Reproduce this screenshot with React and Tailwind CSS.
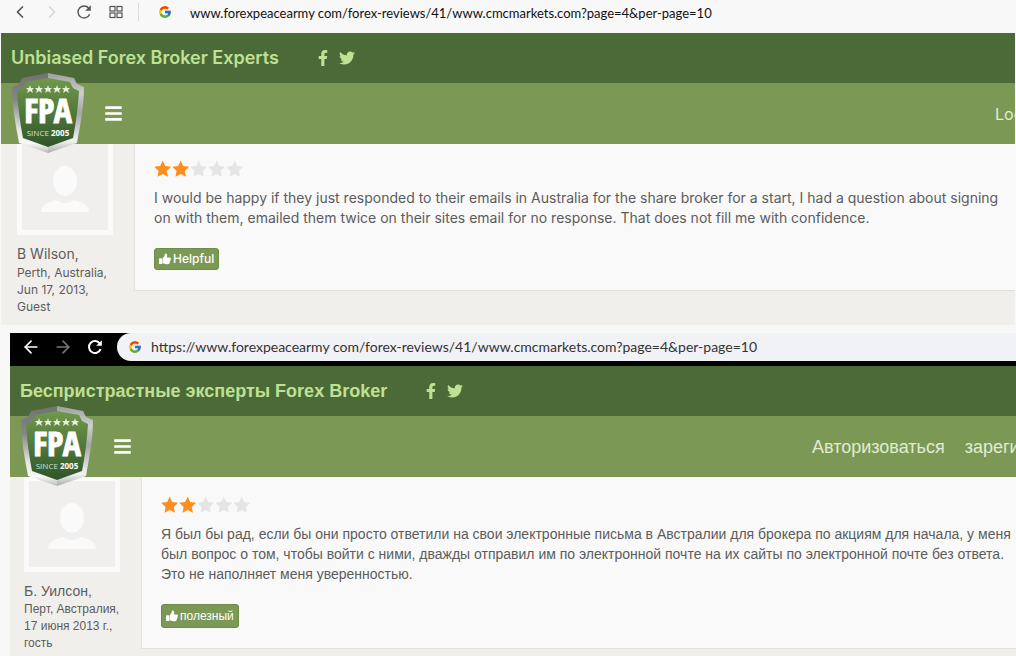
import React from "react";
import { ArrowLeft, ArrowRight, ChevronLeft, ChevronRight } from "lucide-react";
import { FaBars, FaFacebookF, FaTwitter } from "react-icons/fa";
import { FcGoogle } from "react-icons/fc";

const english = {
  id: "en",
  title: "Unbiased Forex Broker Experts",
  links: ["Login"],
  author: "B Wilson,",
  details: ["Perth, Australia,", "Jun 17, 2013,", "Guest"],
  rating: 2,
  text: "I would be happy if they just responded to their emails in Australia for the share broker for a start, I had a question about signing on with them, emailed them twice on their sites email for no response. That does not fill me with confidence.",
  helpful: "Helpful",
};

const russian = {
  id: "ru",
  title: "Беспристрастные эксперты Forex Broker",
  links: ["Авторизоваться", "зарегистрироваться"],
  author: "Б. Уилсон,",
  details: ["Перт, Австралия,", "17 июня 2013 г.,", "гость"],
  rating: 2,
  text: "Я был бы рад, если бы они просто ответили на свои электронные письма в Австралии для брокера по акциям для начала, у меня был вопрос о том, чтобы войти с ними, дважды отправил им по электронной почте на их сайты по электронной почте без ответа. Это не наполняет меня уверенностью.",
  helpful: "полезный",
};

function ReloadIcon({ thick }) {
  return (
    <svg viewBox="0 0 16 16" className="w-4 h-4" fill="none" stroke="currentColor" strokeWidth={thick ? 2 : 1.4}>
      <path d="M13.6 10.2A6 6 0 1 1 13 4.6" />
      <path d="M14.8 1.2v5.6H9.2Z" fill="currentColor" stroke="none" />
    </svg>
  );
}

function GridIcon() {
  return (
    <svg viewBox="0 0 16 16" className="w-4 h-4" fill="none" stroke="currentColor" strokeWidth="1.2">
      <rect x="2" y="2.5" width="5" height="4.5" />
      <rect x="9" y="2.5" width="5" height="4.5" />
      <rect x="2" y="9" width="5" height="4.5" />
      <rect x="9" y="9" width="5" height="4.5" />
    </svg>
  );
}

function StarIcon({ className }) {
  return (
    <svg viewBox="0 0 18 18" className={`w-[18px] h-[18px] ${className}`} fill="currentColor">
      <path d="M8.7 0.6l2.5 5.4 5.9.8-4.3 4.1 1.1 5.9-5.2-2.9-5.2 2.9 1.1-5.9L.3 6.8 6.2 6Z" />
    </svg>
  );
}

function ThumbIcon() {
  return (
    <svg viewBox="0 0 12 12" className="w-3 h-3" fill="currentColor">
      <rect x="0" y="5.2" width="3" height="5.8" rx="0.6" />
      <path d="M3.4 5.4C4.6 4.8 5.2 3.6 5.6 2.6 5.8 1.8 5.7.8 6.6.6c1.2 0 1.7 1 1.6 2.2-.1.7-.4 1.3-.5 1.8h2.9c.8 0 1.3.6 1.3 1.2 0 .5-.2.8-.5 1 .2.6.1 1-.3 1.4.1.6-.1 1-.4 1.3 0 1.1-.6 1.7-1.8 1.7H7.4c-1.5 0-2.3-.7-4-.7Z" />
    </svg>
  );
}

function Shield({ id }) {
  return (
    <svg viewBox="0 0 76 82" className="w-[76px] h-[82px]" role="img" aria-label="FPA since 2005">
      <defs>
        <linearGradient id={`left-${id}`} x1="0" y1="0" x2="0" y2="1">
          <stop offset="0" stopColor="#6f7271" />
          <stop offset="0.35" stopColor="#858887" />
          <stop offset="0.7" stopColor="#e4e5e4" />
          <stop offset="0.88" stopColor="#f7f7f7" />
          <stop offset="1" stopColor="#b9bbba" />
        </linearGradient>
        <linearGradient id={`right-${id}`} x1="0" y1="0" x2="0" y2="1">
          <stop offset="0" stopColor="#9da09e" />
          <stop offset="0.25" stopColor="#cdcfcd" />
          <stop offset="0.5" stopColor="#a3a6a4" />
          <stop offset="0.85" stopColor="#f2f3f2" />
          <stop offset="1" stopColor="#a9acaa" />
        </linearGradient>
        <linearGradient id={`face-${id}`} x1="0" y1="0" x2="0" y2="1">
          <stop offset="0" stopColor="#71994c" />
          <stop offset="0.55" stopColor="#4d7539" />
          <stop offset="1" stopColor="#2f5429" />
        </linearGradient>
      </defs>
      <path d="M38 1 12 6 9 12 2 15c0 20 4 39 7 56l29 10Z" fill={`url(#left-${id})`} />
      <path d="M38 1l26 5 3 6 7 3c0 20-4 39-7 56L38 81Z" fill={`url(#right-${id})`} />
      <path d="M38 6 16 10l-3 6-6 3c1 16 3 32 6 47l25 9 25-9c3-15 5-31 6-47l-6-3-3-6Z" fill={`url(#face-${id})`} />
      {[20, 29, 38, 47, 56].map((x) => (
        <path key={x} transform={`translate(${x} 17)`} fill="#e6f0dc"
          d="M0-4 1-1 4-1 2 1 3 4 0 2-3 4-2 1-4-1-1-1Z" />
      ))}
      <text x="38" y="51" textAnchor="middle" fill="#fff" stroke="#fff" strokeWidth="1"
        className="font-['Open_Sans_Condensed','Roboto_Condensed',sans-serif] text-[34px] font-bold">FPA</text>
      <text x="38" y="64" textAnchor="middle" fill="#d5e2cb" className="font-['Open_Sans',sans-serif] text-[8px]">
        SINCE <tspan className="font-bold" fill="#fff">2005</tspan>
      </text>
    </svg>
  );
}

function SiteHeader({ site, titleClass, linksClass }) {
  return (
    <header className="relative z-10">
      <div className="h-[50px] bg-[#4b6a38] flex items-center gap-9 pl-[10px] text-[#bfe193]">
        <h1 className={`text-lg whitespace-nowrap ${titleClass}`}>{site.title}</h1>
        <div className="flex items-center gap-2">
          <a href="#facebook" aria-label="Facebook"><FaFacebookF size={16} /></a>
          <a href="#twitter" aria-label="Twitter"><FaTwitter size={16} /></a>
        </div>
      </div>
      <nav className="relative h-[61px] bg-[#7b9954] flex items-center justify-between">
        <a href="#home" className="absolute left-[9px] -top-[11px]"><Shield id={site.id} /></a>
        <button aria-label="Menu" className="ml-[103px] text-white"><FaBars size={19} /></button>
        <div className={`flex gap-5 overflow-hidden whitespace-nowrap text-[#e1ecd0] ${linksClass}`}>
          {site.links.map((link) => <a key={link} href="#account">{link}</a>)}
        </div>
      </nav>
    </header>
  );
}

function Avatar() {
  return (
    <div className="w-24 h-24 border-[5px] border-[#fafafa] bg-[#f1efed]">
      <svg viewBox="0 0 86 86" className="w-full h-full" aria-hidden="true">
        <ellipse cx="43" cy="37" rx="12" ry="15" fill="#fafafa" />
        <path d="M19 68c0-8 8-10 15-12 5 4 13 4 18 0 7 2 15 4 15 12Z" fill="#fafafa" />
      </svg>
    </div>
  );
}

function Rating({ value }) {
  return (
    <div className="flex" role="img" aria-label={`${value} / 5`}>
      {[1, 2, 3, 4, 5].map((n) => (
        <StarIcon key={n} className={n <= value ? "text-[#fc8e1e]" : "text-[#e5e5e5]"} />
      ))}
    </div>
  );
}

function Review({ site, className, sideClass, cardClass, buttonClass }) {
  return (
    <article className={`flex items-start bg-[#f1efec] text-[#5c5c5c] ${className}`}>
      <aside className={`shrink-0 ${sideClass}`}>
        <Avatar />
        <p className="mt-[9px] text-sm leading-5">{site.author}</p>
        {site.details.map((line) => <p key={line} className="text-xs leading-[17px]">{line}</p>)}
      </aside>
      <div className={`flex-1 min-w-0 bg-[#f9f9f9] border-l border-b border-[#e2e1df] pl-[19px] pb-5 ${cardClass}`}>
        <Rating value={site.rating} />
        <p className="mt-[10px] text-sm leading-5">{site.text}</p>
        <button className={`mt-5 flex items-center gap-[2px] px-1 rounded-[3px] bg-[#7b9954] border border-[#6d8c47] text-white text-xs font-medium ${buttonClass}`}>
          <ThumbIcon />
          {site.helpful}
        </button>
      </div>
    </article>
  );
}

export default function App() {
  return (
    <main className="min-h-screen bg-[#f8f8f8] overflow-x-hidden flex flex-col gap-2">
      <section lang="en" className="font-[Inter,sans-serif]">
        <div className="h-[33px] flex items-start">
          <div className="flex items-center h-6 pl-[10px] text-[#555]">
            <button aria-label="Back"><ChevronLeft size={20} strokeWidth={2} /></button>
            <button aria-label="Forward" className="ml-3 text-[#d5d5d5]"><ChevronRight size={20} strokeWidth={2} /></button>
            <button aria-label="Reload" className="ml-[14px]"><ReloadIcon /></button>
            <button aria-label="Speed dial" className="ml-4"><GridIcon /></button>
            <span className="ml-[14px] w-px h-[18px] bg-[#ddd]" />
            <FcGoogle size={14} className="ml-[19px]" />
          </div>
          <input aria-label="Address" defaultValue="www.forexpeacearmy com/forex-reviews/41/www.cmcmarkets.com?page=4&per-page=10"
            className="ml-[18px] h-[26px] flex-1 min-w-0 bg-transparent outline-none text-[13px] text-[#111] font-[Lato,sans-serif]" />
        </div>
        <div className="mx-px">
          <SiteHeader site={english} titleClass="font-semibold" linksClass="w-5 text-base" />
          <Review site={english} className="-mt-[5px] pb-[10px]" sideClass="w-[133px] pl-4" cardClass="pt-[21px] pr-4" buttonClass="h-[22px]" />
        </div>
      </section>

      <section lang="ru" className="ml-[10px] flex-1 flex flex-col font-['Liberation_Sans',sans-serif]">
        <div className="h-[33px] bg-black flex items-start text-white">
          <div className="flex items-center h-7 pl-[11px]">
            <button aria-label="Back"><ArrowLeft size={20} strokeWidth={2} /></button>
            <button aria-label="Forward" className="ml-3 text-[#777]"><ArrowRight size={20} strokeWidth={2} /></button>
            <button aria-label="Reload" className="ml-[14px]"><ReloadIcon thick /></button>
          </div>
          <div className="ml-[14px] h-7 flex-1 flex items-center pl-[11px] rounded-l-full bg-[#f1f2f5]">
            <FcGoogle size={14} />
            <input aria-label="Address" defaultValue="https://www.forexpeacearmy com/forex-reviews/41/www.cmcmarkets.com?page=4&per-page=10"
              className="ml-[9px] flex-1 min-w-0 bg-transparent outline-none text-sm text-[#333] font-[Lato,sans-serif]" />
          </div>
        </div>
        <SiteHeader site={russian} titleClass="font-bold" linksClass="w-[204px] text-lg" />
        <Review site={russian} className="-mt-px flex-1" sideClass="w-[131px] pl-[14px]" cardClass="pt-5 pr-1" buttonClass="h-6" />
      </section>
    </main>
  );
}
